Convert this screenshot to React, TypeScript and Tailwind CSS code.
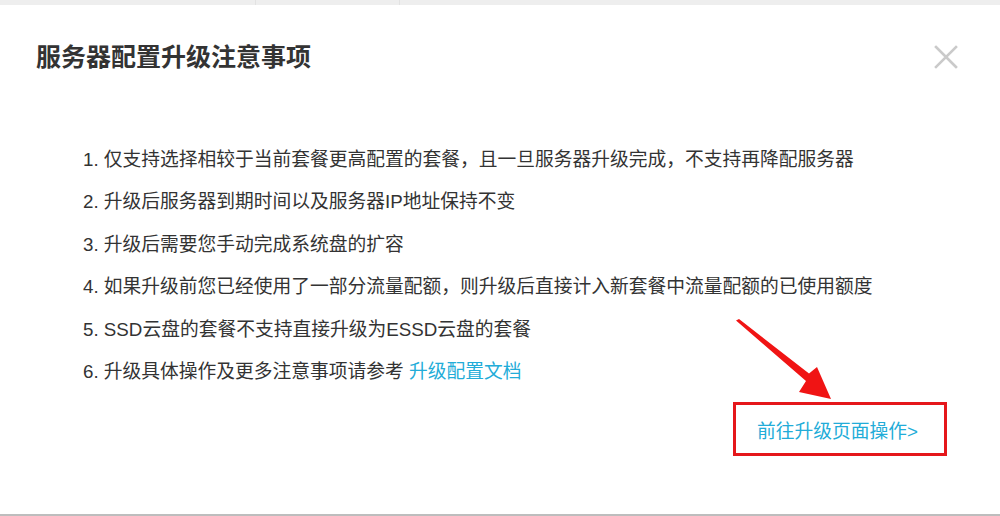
export default function App() {
  const items = [
    '仅支持选择相较于当前套餐更高配置的套餐，且一旦服务器升级完成，不支持再降配服务器',
    '升级后服务器到期时间以及服务器IP地址保持不变',
    '升级后需要您手动完成系统盘的扩容',
    '如果升级前您已经使用了一部分流量配额，则升级后直接计入新套餐中流量配额的已使用额度',
    'SSD云盘的套餐不支持直接升级为ESSD云盘的套餐',
  ]

  return (
    <div className="relative w-[1000px] h-[516px] flex flex-col bg-white overflow-hidden font-['Liberation_Sans','Noto_Sans_CJK_SC',sans-serif]">
      {/* page behind the dialog */}
      <div className="h-[5px] shrink-0 bg-[#eeeeee] flex">
        <div className="w-[256px] border-r border-[#e2e2e2]" />
        <div className="w-[144px] border-r border-[#e2e2e2]" />
        <div className="flex-1" />
      </div>

      {/* Dialog */}
      <div className="flex-1 flex flex-col bg-white border-b-2 border-[#bdbdbd]">
        <div className="flex items-center justify-between pl-[36px] pr-[42px] pt-[32px]">
          <h2 className="text-[25px] leading-[40px] font-bold text-[#333333]">服务器配置升级注意事项</h2>
          <button className="w-[24px] h-[24px] flex items-center justify-center text-[#cacaca]">
            <svg viewBox="0 0 24 24" className="w-[24px] h-[24px]" fill="none" stroke="currentColor" strokeWidth="2.6" strokeLinecap="square">
              <path d="M2 2L22 22M22 2L2 22" />
            </svg>
          </button>
        </div>

        <ol className="mt-[62px] pl-[83px] text-[18.75px] text-[#333333]">
          {items.map((t, i) => (
            <li key={i} className="h-[42.4px] leading-[42.4px] whitespace-nowrap">
              {i + 1}. {t}
            </li>
          ))}
          <li className="h-[42.4px] leading-[42.4px] whitespace-nowrap">
            6. 升级具体操作及更多注意事项请参考 <span className="text-[#22acd8]">升级配置文档</span>
          </li>
        </ol>

        <div className="flex justify-end pr-[53px] mt-[9px]">
          <div className="w-[214px] h-[54px] border-[3px] border-[#e5171b] flex items-center pl-[21px] pt-[5px] text-[18.75px] text-[#22acd8]">
            前往升级页面操作&gt;
          </div>
        </div>
      </div>

      {/* red arrow annotation */}
      <svg className="absolute left-0 top-0 pointer-events-none" width="1000" height="516" viewBox="0 0 1000 516">
        <path d="M736 320.5 L739 319 L809 373.5 L817 367 L831 399 L799 392 L806 381 Z" fill="#f01414" />
      </svg>
    </div>
  )
}
